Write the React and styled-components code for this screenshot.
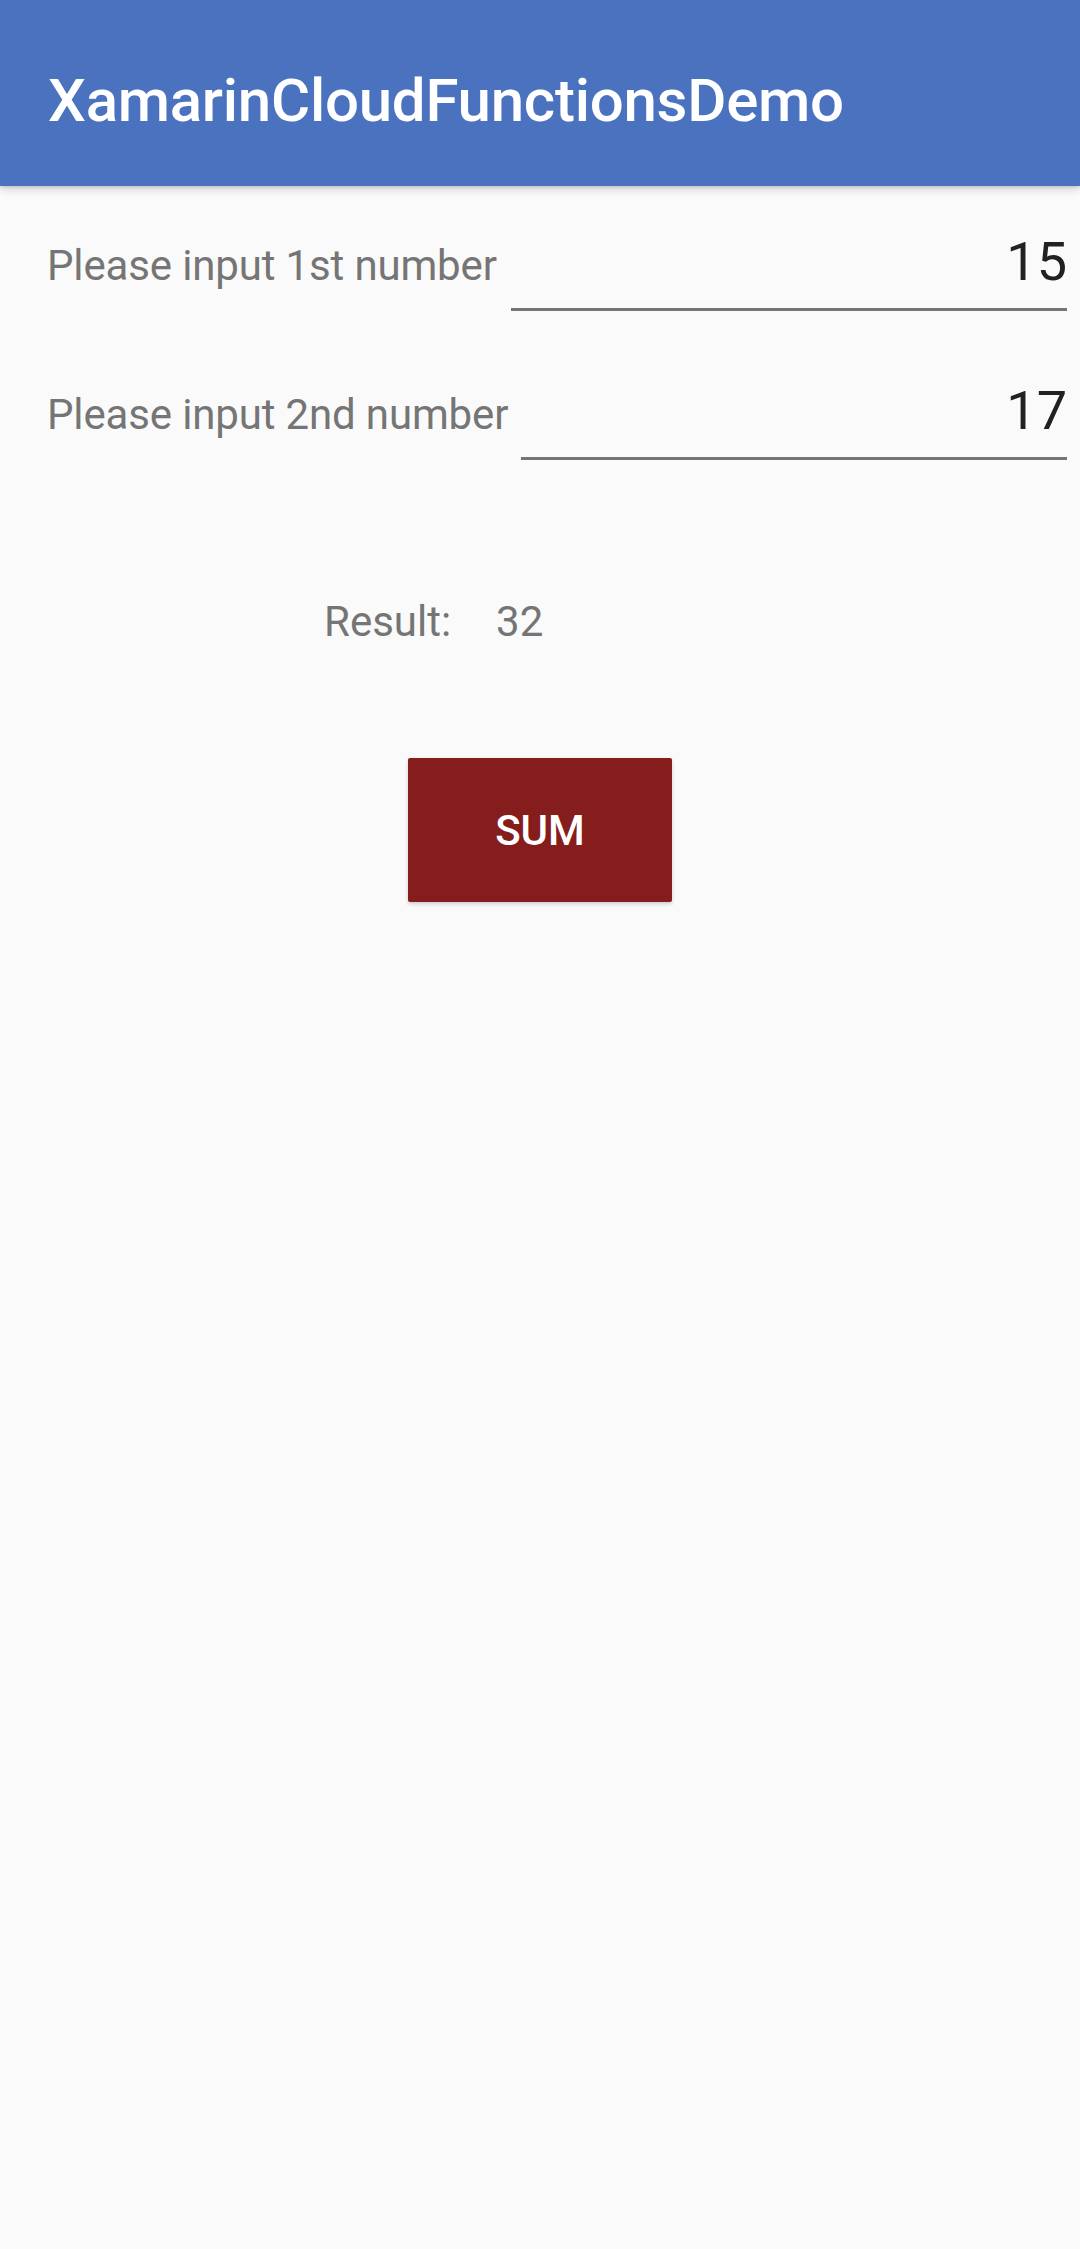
import React from 'react';
import styled, { createGlobalStyle } from 'styled-components';

const Global = createGlobalStyle`
  html, body {
    margin: 0;
    padding: 0;
    height: 100%;
    background: #fafafa;
  }
  body {
    font-family: Roboto, "Liberation Sans", sans-serif;
  }
  #root {
    min-height: 100%;
  }
`;

const Screen = styled.div`
  min-height: 2249px;
  background: #fafafa;
`;

const Toolbar = styled.header`
  height: 186px;
  background: #4a72bf;
  display: flex;
  align-items: center;
  padding: 0 48px;
  box-sizing: border-box;
  box-shadow: 0 4px 8px rgba(0, 0, 0, 0.14), 0 1px 3px rgba(0, 0, 0, 0.12);
  position: relative;
  z-index: 1;
`;

const Title = styled.h1`
  margin: 0;
  padding-top: 16px;
  color: #fff;
  font-size: 60px;
  font-weight: 500;
  line-height: 70px;
  letter-spacing: -0.25px;
`;

const Form = styled.div`
  padding: 44px 13px 0 47px;
  display: flex;
  flex-direction: column;
  gap: 68px;
`;

const Row = styled.div`
  display: flex;
  align-items: baseline;
  gap: ${p => p.gap}px;
`;

const Label = styled.span`
  font-size: 42px;
  line-height: 50px;
  color: #757575;
  white-space: nowrap;
  letter-spacing: -0.15px;
`;

const Field = styled.div`
  flex: 1;
  text-align: right;
  font-size: 54px;
  line-height: 64px;
  color: #212121;
  padding-bottom: 14px;
  border-bottom: 3px solid #757575;
`;

const ResultRow = styled.div`
  display: flex;
  gap: 45px;
  padding-left: 324px;
  margin-top: 137px;
  font-size: 42px;
  line-height: 50px;
  color: #757575;
`;

const ButtonWrap = styled.div`
  display: flex;
  justify-content: center;
  margin-top: 111px;
`;

const SumButton = styled.button`
  width: 264px;
  height: 144px;
  border: none;
  border-radius: 2px;
  background: #851d1d;
  color: #fff;
  font-family: Roboto, "Liberation Sans", sans-serif;
  font-size: 42px;
  font-weight: 500;
  box-shadow: 0 2px 4px rgba(0, 0, 0, 0.18);
`;

const inputs = [
  { label: 'Please input 1st number', value: '15', gap: 14 },
  { label: 'Please input 2nd number', value: '17', gap: 13 },
];

export default function App() {
  return (
    <Screen>
      <Global />
      <Toolbar>
        <Title>XamarinCloudFunctionsDemo</Title>
      </Toolbar>
      <Form>
        {inputs.map(i => (
          <Row key={i.label} gap={i.gap}>
            <Label>{i.label}</Label>
            <Field>{i.value}</Field>
          </Row>
        ))}
      </Form>
      <ResultRow>
        <span>Result:</span>
        <span>32</span>
      </ResultRow>
      <ButtonWrap>
        <SumButton>SUM</SumButton>
      </ButtonWrap>
    </Screen>
  );
}
